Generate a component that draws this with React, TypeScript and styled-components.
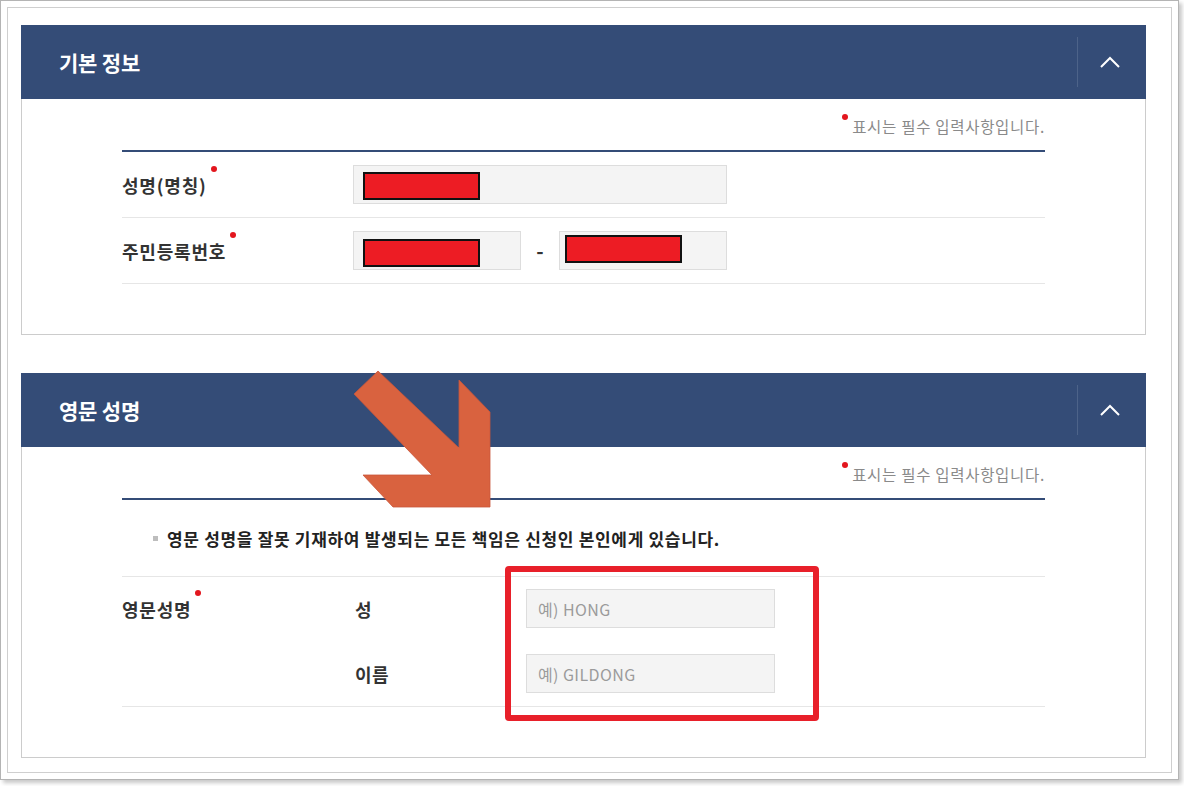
import React from 'react';
import styled, { createGlobalStyle } from 'styled-components';

const GlobalStyle = createGlobalStyle`
  html, body {
    margin: 0;
    padding: 0;
    background: #ffffff;
  }
  body {
    font-family: "Noto Sans CJK KR", "Noto Sans", sans-serif;
    color: #333;
  }
  * {
    box-sizing: border-box;
  }
`;

const Page = styled.div`
  position: relative;
  width: 1184px;
  height: 786px;
`;

const OuterFrame = styled.div`
  width: 1179px;
  height: 780px;
  border: 1px solid #b4b4b4;
  background: #fff;
  box-shadow: 3px 3px 4px rgba(0, 0, 0, 0.22);
  padding: 6px;
`;

const InnerFrame = styled.div`
  height: 100%;
  border: 1px solid #cfcfcf;
  padding: 17px 24px 0 13px;
  display: flex;
  flex-direction: column;
  gap: 38px;
`;

const Panel = styled.section`
  width: 1125px;
`;

const PanelHeader = styled.div`
  height: 74px;
  background: #344c77;
  display: flex;
  align-items: center;
  justify-content: space-between;
  padding-left: 38px;
`;

const PanelTitle = styled.h2`
  margin: 0;
  color: #fff;
  font-size: 21px;
  font-weight: 700;
  letter-spacing: -0.2px;
`;

const Toggle = styled.button`
  width: 69px;
  height: 50px;
  border: none;
  border-left: 1px solid #4d6389;
  background: transparent;
  display: flex;
  align-items: center;
  justify-content: center;
  padding: 0 4px 0 0;
  cursor: pointer;
`;

const PanelBody = styled.div<{ $bottom: number }>`
  border: 1px solid #cccccc;
  border-top: none;
  padding: 0 100px ${(p) => p.$bottom}px;
`;

const Note = styled.div`
  height: 51px;
  display: flex;
  justify-content: flex-end;
  align-items: center;
  padding-top: 2px;
  font-size: 15.5px;
  color: #8a8a8a;
  letter-spacing: 0.7px;
`;

const Dot = styled.span<{ $up: number }>`
  display: inline-block;
  width: 6px;
  height: 6px;
  border-radius: 50%;
  background: #e3161e;
  margin-right: 4px;
  transform: translateY(-${(p) => p.$up}px);
`;

const DarkRule = styled.div`
  height: 2px;
  background: #344c77;
`;

const Row = styled.div`
  display: flex;
  align-items: center;
  height: 66px;
  border-bottom: 1px solid #e6e6e6;
`;

const Label = styled.div`
  width: 231px;
  font-size: 18px;
  font-weight: 600;
  color: #333;
  letter-spacing: 0.8px;
  display: flex;
  align-items: center;
`;

const LabelDot = styled.span`
  display: inline-block;
  width: 6px;
  height: 6px;
  border-radius: 50%;
  background: #e3161e;
  margin-left: 4px;
  transform: translateY(-16px);
`;

const Field = styled.div<{ $width: number; $padX: number; $padTop: number }>`
  width: ${(p) => p.$width}px;
  height: 39px;
  background: #f4f4f4;
  border: 1px solid #dddddd;
  padding: ${(p) => p.$padTop}px 0 0 ${(p) => p.$padX - 1}px;
`;

const Redact = styled.div`
  width: 117px;
  height: 28px;
  background: #ed1c24;
  border: 2px solid #111;
`;

const Dash = styled.span`
  width: 38px;
  text-align: center;
  font-size: 20px;
  font-weight: 700;
  color: #333;
`;

const Warning = styled.p`
  margin: 0;
  height: 77px;
  display: flex;
  align-items: center;
  gap: 9px;
  padding: 1px 0 0 31px;
  font-size: 17px;
  font-weight: 700;
  color: #222;
  letter-spacing: 0.68px;
  border-bottom: 1px solid #e6e6e6;
`;

const Bullet = styled.span`
  width: 5px;
  height: 5px;
  background: #bdbdbd;
`;

const NameRow = styled.div`
  display: flex;
  align-items: flex-start;
  padding: 12px 0 13px;
  border-bottom: 1px solid #e6e6e6;
`;

const NameLabel = styled(Label)`
  height: 39px;
`;

const SubRows = styled.div`
  display: flex;
  flex-direction: column;
  gap: 26px;
`;

const SubRow = styled.div`
  display: flex;
  align-items: center;
`;

const SubLabel = styled.div`
  width: 173px;
  padding-left: 2px;
  font-size: 18px;
  font-weight: 600;
  color: #333;
  letter-spacing: 0.5px;
`;

const TextInput = styled.input`
  width: 249px;
  height: 39px;
  background: #f4f4f4;
  border: 1px solid #dddddd;
  padding: 0 11px;
  font-family: "Noto Sans CJK KR", "Noto Sans", sans-serif;
  font-size: 16px;
  letter-spacing: 0.4px;
  color: #333;
  outline: none;

  &::placeholder {
    color: #9b9b9b;
  }
`;

const Highlight = styled.div`
  position: absolute;
  left: 505px;
  top: 566px;
  width: 314px;
  height: 155px;
  border: 6px solid #e8202a;
  border-radius: 4px;
  pointer-events: none;
`;

const ArrowMark = styled.svg`
  position: absolute;
  left: 350px;
  top: 368px;
  pointer-events: none;
`;

const ChevronUp = () => (
  <svg width="22" height="12" viewBox="0 0 22 12">
    <polyline points="2,11 11,2 20,11" fill="none" stroke="#fff" strokeWidth="2" />
  </svg>
);

const RequiredNote = () => (
  <Note>
    <Dot $up={9} />
    표시는 필수 입력사항입니다.
  </Note>
);

const App: React.FC = () => {
  return (
    <Page>
      <GlobalStyle />
      <OuterFrame>
        <InnerFrame>
          {/* 기본 정보 */}
          <Panel>
            <PanelHeader>
              <PanelTitle>기본 정보</PanelTitle>
              <Toggle aria-label="접기">
                <ChevronUp />
              </Toggle>
            </PanelHeader>
            <PanelBody $bottom={50}>
              <RequiredNote />
              <DarkRule />
              <Row>
                <Label>
                  성명(명칭)
                  <LabelDot />
                </Label>
                <Field $width={374} $padX={10} $padTop={6}>
                  <Redact />
                </Field>
              </Row>
              <Row>
                <Label>
                  주민등록번호
                  <LabelDot />
                </Label>
                <Field $width={168} $padX={10} $padTop={7}>
                  <Redact />
                </Field>
                <Dash>-</Dash>
                <Field $width={168} $padX={6} $padTop={3}>
                  <Redact />
                </Field>
              </Row>
            </PanelBody>
          </Panel>

          {/* 영문 성명 */}
          <Panel>
            <PanelHeader>
              <PanelTitle>영문 성명</PanelTitle>
              <Toggle aria-label="접기">
                <ChevronUp />
              </Toggle>
            </PanelHeader>
            <PanelBody $bottom={50}>
              <RequiredNote />
              <DarkRule />
              <Warning>
                <Bullet />
                영문 성명을 잘못 기재하여 발생되는 모든 책임은 신청인 본인에게 있습니다.
              </Warning>
              <NameRow>
                <NameLabel>
                  영문성명
                  <LabelDot />
                </NameLabel>
                <SubRows>
                  <SubRow>
                    <SubLabel>성</SubLabel>
                    <TextInput placeholder="예) HONG" />
                  </SubRow>
                  <SubRow>
                    <SubLabel>이름</SubLabel>
                    <TextInput placeholder="예) GILDONG" />
                  </SubRow>
                </SubRows>
              </NameRow>
            </PanelBody>
          </Panel>
        </InnerFrame>
      </OuterFrame>

      <ArrowMark width="145" height="142" viewBox="0 0 145 142">
        <polygon
          points="28,3 109,80 109,12 140,44 140,139 43,139 13,107 82,107 4,26"
          fill="#d9623f"
          stroke="#c9563a"
          strokeWidth="0.8"
        />
      </ArrowMark>
      <Highlight />
    </Page>
  );
};

export default App;
